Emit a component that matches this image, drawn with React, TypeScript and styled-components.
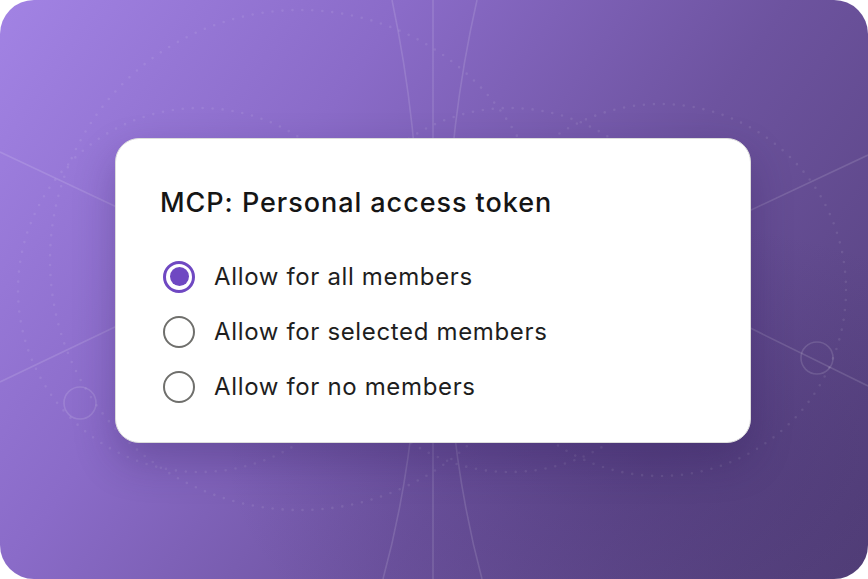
import React from 'react'
import styled, { createGlobalStyle } from 'styled-components'

const GlobalStyle = createGlobalStyle`
  html, body {
    margin: 0;
    padding: 0;
    background: #ffffff;
  }
  body {
    font-family: Inter, "Noto Sans", "Liberation Sans", sans-serif;
    -webkit-font-smoothing: antialiased;
  }
`

const Frame = styled.div`
  position: relative;
  width: 868px;
  height: 579px;
  border-radius: 34px;
  overflow: hidden;
  display: flex;
  align-items: center;
  justify-content: center;
  background:
    radial-gradient(ellipse 70% 60% at 75% 80%, rgba(60, 40, 100, 0.3), rgba(60, 40, 100, 0) 70%),
    linear-gradient(125deg, #a283e4 0%, #8a6bc8 32%, #6d539f 62%, #523f78 100%);
`

const Backdrop = styled.svg`
  position: absolute;
  inset: 0;
  width: 100%;
  height: 100%;
  pointer-events: none;
`

const Card = styled.section`
  position: relative;
  box-sizing: border-box;
  width: 636px;
  height: 305px;
  margin: 2px 2px 0 0;
  padding: 48px 44px 0 44px;
  background: #ffffff;
  border: 1px solid #dcdcdc;
  border-radius: 24px;
  box-shadow: 0 18px 40px rgba(40, 22, 80, 0.28);
`

const Title = styled.h2`
  margin: 0 0 30px 0;
  font-size: 27px;
  line-height: 32px;
  font-weight: 500;
  color: #151515;
  letter-spacing: 0.95px;
`

const Options = styled.div`
  display: flex;
  flex-direction: column;
`

const Option = styled.label`
  display: flex;
  align-items: center;
  gap: 19px;
  height: 55px;
  font-size: 24px;
  letter-spacing: 0.65px;
  color: #1e1e1e;
  cursor: pointer;
`

const Radio = styled.span<{ $checked?: boolean }>`
  box-sizing: border-box;
  flex: none;
  width: 32px;
  height: 32px;
  margin-left: 3px;
  border-radius: 50%;
  border: ${p => (p.$checked ? '3px solid #6f48c2' : '2.5px solid #6f6f6c')};
  display: flex;
  align-items: center;
  justify-content: center;

  &::after {
    content: '';
    display: ${p => (p.$checked ? 'block' : 'none')};
    width: 19px;
    height: 19px;
    border-radius: 50%;
    background: #6f48c2;
  }
`

const choices = [
  { label: 'Allow for all members', checked: true },
  { label: 'Allow for selected members', checked: false },
  { label: 'Allow for no members', checked: false },
]

const Decoration = () => (
  <Backdrop viewBox="0 0 868 579">
    <g fill="none" stroke="rgba(255,255,255,0.13)" strokeWidth="1.6">
      <line x1="433" y1="0" x2="433" y2="579" />
      <path d="M392 0 C430 180 432 400 383 579" />
      <path d="M477 0 C436 180 434 400 482 579" />
      <line x1="0" y1="152" x2="140" y2="218" />
      <line x1="0" y1="382" x2="140" y2="315" />
      <line x1="730" y1="318" x2="868" y2="386" />
      <line x1="730" y1="220" x2="868" y2="155" />
      <circle cx="80" cy="403" r="16" />
      <circle cx="817" cy="358" r="16" />
    </g>
    <g
      fill="none"
      stroke="rgba(255,255,255,0.09)"
      strokeWidth="2.6"
      strokeLinecap="round"
      strokeDasharray="0 10"
    >
      <circle cx="200" cy="290" r="182" />
      <circle cx="510" cy="290" r="182" />
      <circle cx="660" cy="290" r="186" />
      <circle cx="300" cy="260" r="250" />
    </g>
  </Backdrop>
)

export default function App() {
  return (
    <>
      <GlobalStyle />
      <Frame>
        <Decoration />
        <Card>
          <Title>MCP: Personal access token</Title>
          <Options>
            {choices.map(c => (
              <Option key={c.label}>
                <Radio $checked={c.checked} />
                {c.label}
              </Option>
            ))}
          </Options>
        </Card>
      </Frame>
    </>
  )
}
